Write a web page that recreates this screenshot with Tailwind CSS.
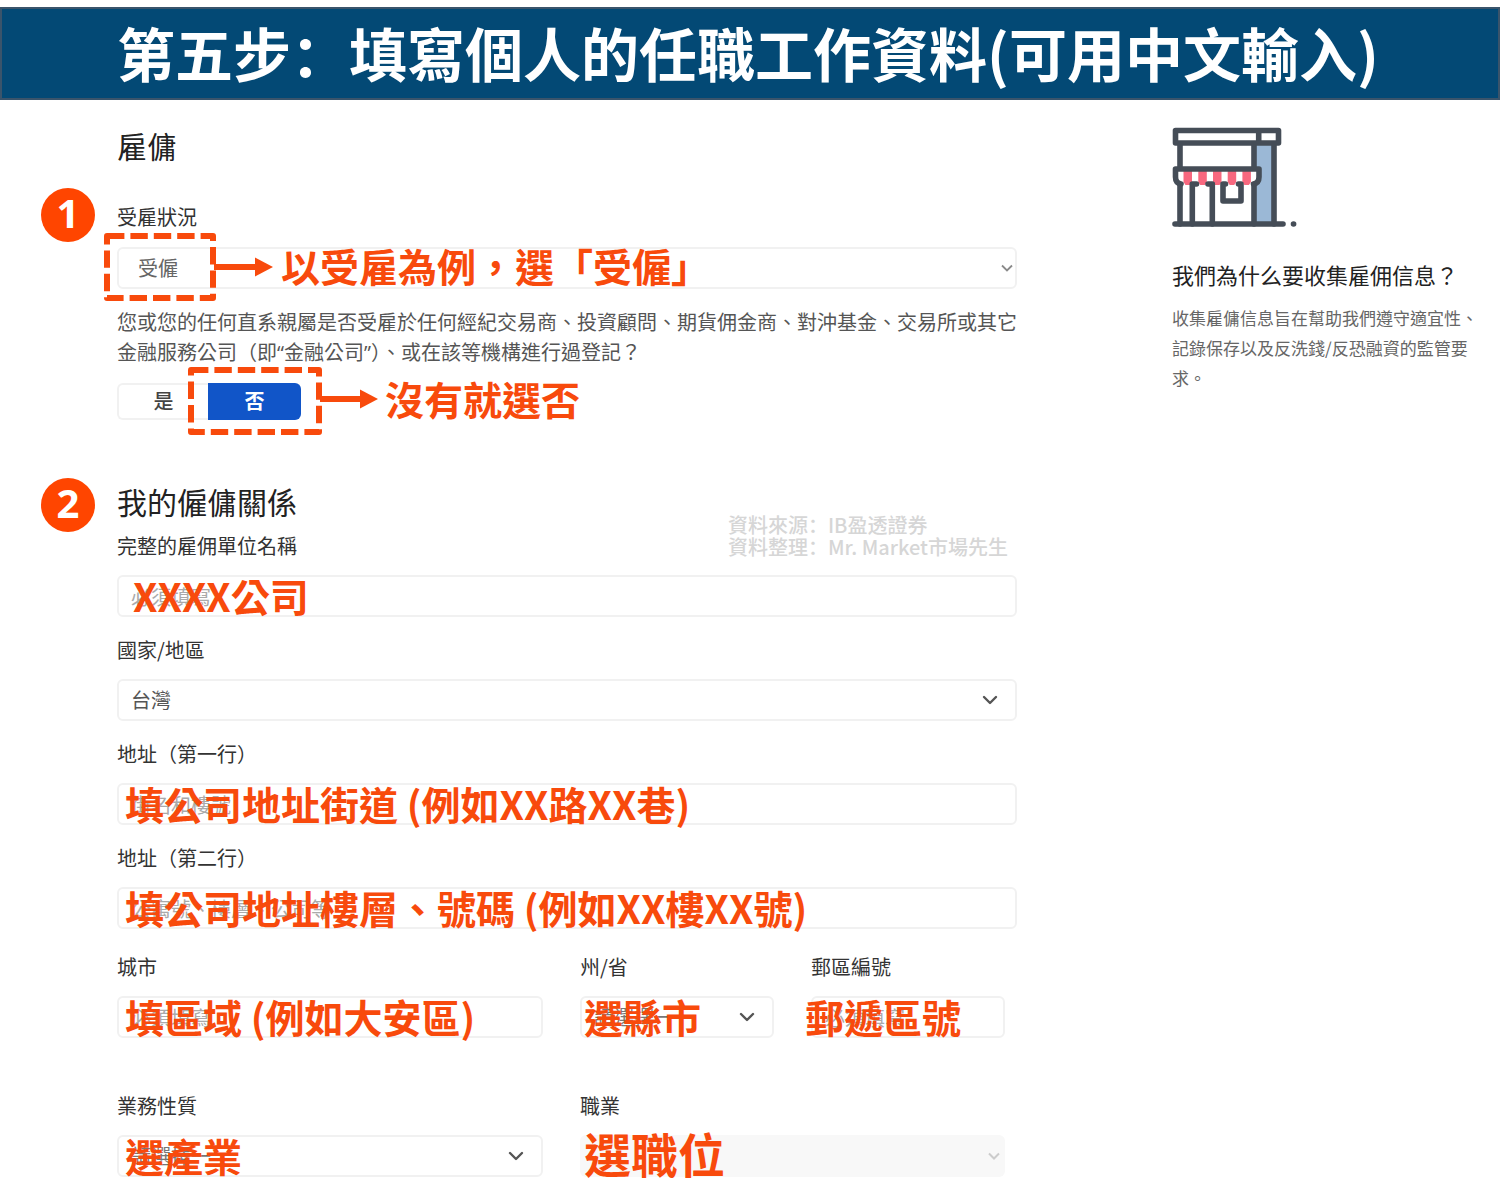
<!DOCTYPE html>
<html lang="zh-Hant">
<head>
<meta charset="utf-8">
<meta name="viewport" content="width=device-width, initial-scale=1">
<title>第五步：填寫個人的任職工作資料</title>
<script src="https://cdn.jsdelivr.net/npm/@tailwindcss/browser@4"></script>
</head>
<body class="bg-white pt-[7px] font-['Noto_Sans_CJK_TC',sans-serif] text-xl leading-[30px] text-[#333]">
<header class="flex h-[93px] items-center justify-center border-2 border-[#3a546b] bg-[#034975] pr-1 pb-1">
  <h1 lang="zh-Hans" class="font-['Noto_Sans_CJK_SC',sans-serif] text-[58px] leading-[84px] font-bold whitespace-nowrap text-white">第五步：填寫個人的任職工作資料(可用中文輸入)</h1>
</header>

<main class="flex items-start gap-[155px] pt-[27px] pr-5 pb-6 pl-[117px]">
  <form class="min-w-0 flex-1">
    <section>
      <h2 class="text-3xl leading-9 text-[#222]">雇傭</h2>
      <div class="relative mt-[39px]">
        <span class="absolute top-[-14px] left-[-76px] flex size-[54px] items-center justify-center rounded-full bg-[#ff4500] pb-1 font-['Open_Sans',sans-serif] text-[40px] font-bold text-white">1</span>
        <label for="status">受雇狀況</label>
        <div class="relative mt-[15px]">
          <select id="status" class="block h-[42px] w-full appearance-none rounded-md border-2 border-[#f1f1f1] bg-white pl-[19px] text-[#666]"><option>受僱</option></select>
          <svg class="pointer-events-none absolute top-[17px] right-1 h-2 w-3" viewBox="0 0 12 8" fill="none" stroke="#8a8a8a" stroke-width="1.8"><path d="M1 1.5l5 5 5-5"/></svg>
          <div class="pointer-events-none absolute top-[-14px] left-[-13px] flex h-[68px] items-center text-[#f84a0c]">
            <svg class="h-[68px] w-[170px]" viewBox="0 0 170 68" fill="none"><path d="M3 3H109V65H3Z" stroke="currentColor" stroke-width="6" stroke-linejoin="round" stroke-dasharray="17.4 6"/><path d="M110 34H153" stroke="currentColor" stroke-width="6"/><path d="M151 24.500L169 34L151 43.500Z" fill="currentColor"/></svg>
            <span class="ml-[7px] pb-1 text-[39px] font-bold whitespace-nowrap">以受雇為例，選「受僱」</span>
          </div>
        </div>
      </div>
      <p class="mt-[18px] text-[#555]">您或您的任何直系親屬是否受雇於任何經紀交易商、投資顧問、期貨佣金商、對沖基金、交易所或其它金融服務公司（即<span class="font-['Open_Sans',sans-serif] leading-none">“</span>金融公司<span class="font-['Open_Sans',sans-serif] leading-none">”</span>）、或在該等機構進行過登記？</p>
      <div class="relative mt-4 flex">
        <button type="button" class="h-[37px] w-[91px] rounded-l-md border-2 border-r-0 border-[#f1f1f1] bg-white pb-0.5 font-medium text-[#444]">是</button>
        <button type="button" class="h-[37px] w-[93px] rounded-r-md bg-[#1155c8] pb-0.5 font-bold text-white">否</button>
        <div class="pointer-events-none absolute top-[-16px] left-[71px] flex h-[68px] items-center text-[#f84a0c]">
          <svg class="h-[68px] w-[190px]" viewBox="0 0 190 68" fill="none"><path d="M3 3H131V65H3Z" stroke="currentColor" stroke-width="6" stroke-linejoin="round" stroke-dasharray="17.4 6"/><path d="M132 32H174" stroke="currentColor" stroke-width="6"/><path d="M172 22.500L190 32L172 41.500Z" fill="currentColor"/></svg>
          <span class="ml-[7px] pb-1.5 text-[39px] font-bold whitespace-nowrap">沒有就選否</span>
        </div>
      </div>
    </section>

    <section class="relative mt-[61px]">
      <span class="absolute top-[-3px] left-[-76px] flex size-[54px] items-center justify-center rounded-full bg-[#ff4500] pb-1 font-['Open_Sans',sans-serif] text-[40px] font-bold text-white">2</span>
      <p lang="zh-Hans" class="absolute top-[33px] right-[9px] font-['Noto_Sans_CJK_SC',sans-serif] leading-[22px] font-medium text-[#d6d6d6]">資料來源：IB盈透證券<br>資料整理：Mr. Market市場先生</p>
      <h2 class="text-3xl leading-10 text-[#222]">我的僱傭關係</h2>
      <div class="mt-[10px] flex flex-col gap-[18px]">
        <div>
          <label for="company">完整的雇佣單位名稱</label>
          <div class="relative mt-[14px]">
            <input id="company" type="text" placeholder="必須填寫" class="block h-[42px] w-full rounded-md border-2 border-[#f1f1f1] bg-white px-3 placeholder:text-[#aaa]">
            <span class="pointer-events-none absolute inset-y-0 left-4 flex items-center pb-0.5 text-[39px] font-bold whitespace-nowrap text-[#f84a0c]">XXXX公司</span>
          </div>
        </div>
        <div>
          <label for="country">國家/地區</label>
          <div class="relative mt-[14px]">
            <select id="country" class="block h-[42px] w-full appearance-none rounded-md border-2 border-[#f1f1f1] bg-white pl-3 text-[#555]"><option>台灣</option></select>
            <svg class="pointer-events-none absolute top-4 right-[19px] h-[10px] w-4" viewBox="0 0 16 10" fill="none" stroke="#555" stroke-width="2.400" stroke-linecap="round" stroke-linejoin="round"><path d="M2 2l6 6 6-6"/></svg>
          </div>
        </div>
        <div>
          <label for="addr1">地址（第一行）</label>
          <div class="relative mt-[14px]">
            <input id="addr1" type="text" placeholder="街名和樓號" class="block h-[42px] w-full rounded-md border-2 border-[#f1f1f1] bg-white px-3 placeholder:text-[#aaa]">
            <span class="pointer-events-none absolute inset-y-0 left-2 flex items-center pb-0.5 text-[39px] font-bold whitespace-pre text-[#f84a0c]">填公司地址街道 (例如XX路XX巷)</span>
          </div>
        </div>
        <div>
          <label for="addr2">地址（第二行）</label>
          <div class="relative mt-[14px]">
            <input id="addr2" type="text" placeholder="公寓號、樓層、公司等" class="block h-[42px] w-full rounded-md border-2 border-[#f1f1f1] bg-white px-3 placeholder:text-[#aaa]">
            <span class="pointer-events-none absolute inset-y-0 left-2 flex items-center pb-0.5 text-[39px] font-bold whitespace-pre text-[#f84a0c]">填公司地址樓層、號碼 (例如XX樓XX號)</span>
          </div>
        </div>
      </div>

      <div class="mt-[23px] grid grid-cols-[426fr_194fr_194fr] gap-x-[37px] gap-y-[53px] pr-3">
        <div>
          <label for="city">城市</label>
          <div class="relative mt-[14px]">
            <input id="city" type="text" placeholder="必須填寫" class="block h-[42px] w-full rounded-md border-2 border-[#f1f1f1] bg-white px-3 placeholder:text-[#aaa]">
            <span class="pointer-events-none absolute inset-y-0 left-2 flex items-center pb-0.5 text-[39px] font-bold whitespace-pre text-[#f84a0c]">填區域 (例如大安區)</span>
          </div>
        </div>
        <div>
          <label for="state">州/省</label>
          <div class="relative mt-[14px]">
            <select id="state" class="block h-[42px] w-full appearance-none rounded-md border-2 border-[#f1f1f1] bg-white pl-3 text-[#777]"><option>請選擇一</option></select>
            <svg class="pointer-events-none absolute top-4 right-[19px] h-[10px] w-4" viewBox="0 0 16 10" fill="none" stroke="#555" stroke-width="2.400" stroke-linecap="round" stroke-linejoin="round"><path d="M2 2l6 6 6-6"/></svg>
            <span class="pointer-events-none absolute inset-y-0 left-1 flex items-center pb-0.5 text-[39px] font-bold whitespace-nowrap text-[#f84a0c]">選縣市</span>
          </div>
        </div>
        <div>
          <label for="zip">郵區編號</label>
          <div class="relative mt-[14px]">
            <input id="zip" type="text" placeholder="必須填寫" class="block h-[42px] w-full rounded-md border-2 border-[#f1f1f1] bg-white px-3 placeholder:text-[#aaa]">
            <span class="pointer-events-none absolute inset-y-0 left-[-6px] flex items-center pb-0.5 text-[39px] font-bold whitespace-nowrap text-[#f84a0c]">郵遞區號</span>
          </div>
        </div>
        <div>
          <label for="business">業務性質</label>
          <div class="relative mt-[14px]">
            <select id="business" class="block h-[42px] w-full appearance-none rounded-md border-2 border-[#f1f1f1] bg-white pl-3 text-[#777]"><option>請選擇一</option></select>
            <svg class="pointer-events-none absolute top-4 right-[19px] h-[10px] w-4" viewBox="0 0 16 10" fill="none" stroke="#555" stroke-width="2.400" stroke-linecap="round" stroke-linejoin="round"><path d="M2 2l6 6 6-6"/></svg>
            <span class="pointer-events-none absolute inset-y-0 left-2 flex items-center pb-0.5 text-[39px] font-bold whitespace-nowrap text-[#f84a0c]">選產業</span>
          </div>
        </div>
        <div class="col-span-2">
          <label for="job">職業</label>
          <div class="relative mt-[14px]">
            <select id="job" disabled class="block h-[42px] w-full appearance-none rounded-md bg-[#f8f8f8] pl-3"><option></option></select>
            <svg class="pointer-events-none absolute top-[17px] right-[5px] h-2 w-3" viewBox="0 0 12 8" fill="none" stroke="#ccc" stroke-width="2"><path d="M1 1.500l5 5 5-5"/></svg>
            <span class="pointer-events-none absolute inset-y-0 left-1 flex items-center pb-1.5 text-[47px] font-bold whitespace-nowrap text-[#f84a0c]">選職位</span>
          </div>
        </div>
      </div>
    </section>
  </form>

  <aside class="w-[308px] shrink-0">
    <svg class="h-[102px] w-[126px]" viewBox="0 0 126 102" fill="none" stroke="#454d57" stroke-width="5.600" stroke-linecap="round" stroke-linejoin="round">
      <path d="M84 17H102V97H84Z" fill="#9bb8d6" stroke="none"/>
      <path d="M3.500 3.500H106.500V16H3.500ZM86.700 4V16M8 17V97M102 17V97M82 17V97"/>
      <path d="M3.500 42H87V50Q87 57 81 57H9Q3.500 57 3.500 50Z" fill="#fff" stroke="none"/>
      <path d="M11.500 44h8.500v11l-2 3h-4.500l-2-3ZM26.300 44h8.500v11l-2 3h-4.500l-2-3ZM41 44h8.500v11l-2 3h-4.500l-2-3ZM55.700 44h8.500v11l-2 3h-4.500l-2-3ZM70.400 44h8.500v11l-2 3h-4.500l-2-3Z" fill="#f8687f" stroke="none"/>
      <path d="M9 57Q3.500 56 3.500 50V42H87V50Q87 56 81.500 57M20.300 97V57H24.500M36 57H40.300V97M53.500 57H51V74H69V57H66.500"/>
      <path d="M3 97H111M121.500 97h.1"/>
    </svg>
    <h3 class="mt-[30px] text-[22px] whitespace-nowrap text-[#222]">我們為什么要收集雇佣信息？</h3>
    <p class="mt-[14px] text-[17px] text-[#666]">收集雇傭信息旨在幫助我們遵守適宜性、記錄保存以及反洗錢/反恐融資的監管要求。</p>
  </aside>
</main>
</body>
</html>
